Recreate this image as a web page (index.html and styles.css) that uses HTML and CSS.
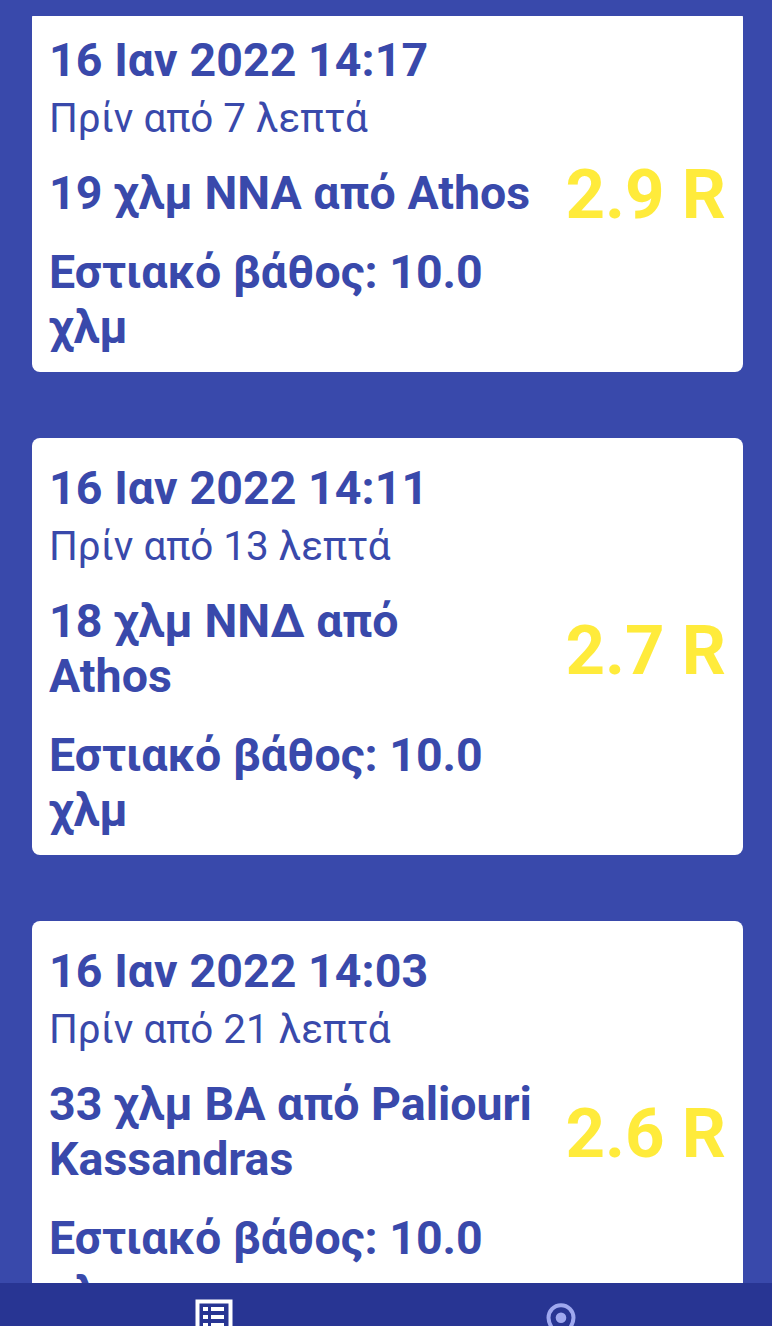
FILE: index.html
```html
<!DOCTYPE html>
<html lang="el">
<head>
    <meta charset="UTF-8">
    <meta name="viewport" content="width=device-width, initial-scale=1.0">
    <title>Σεισμοί</title>
    <link rel="stylesheet" href="styles.css">
</head>
<body>
    <main class="quake-list">
        <article class="card card-first">
            <div class="info">
                <h2 class="date">16 Ιαν 2022 14:17</h2>
                <p class="ago">Πρίν από 7 λεπτά</p>
                <p class="place">19 χλμ ΝΝΑ από Athos</p>
                <p class="depth">Εστιακό βάθος: 10.0<br>χλμ</p>
            </div>
            <div class="magnitude">2.9 R</div>
        </article>

        <article class="card">
            <div class="info">
                <h2 class="date">16 Ιαν 2022 14:11</h2>
                <p class="ago">Πρίν από 13 λεπτά</p>
                <p class="place">18 χλμ ΝΝΔ από<br>Athos</p>
                <p class="depth">Εστιακό βάθος: 10.0<br>χλμ</p>
            </div>
            <div class="magnitude">2.7 R</div>
        </article>

        <article class="card">
            <div class="info">
                <h2 class="date">16 Ιαν 2022 14:03</h2>
                <p class="ago">Πρίν από 21 λεπτά</p>
                <p class="place">33 χλμ ΒΑ από Paliouri<br>Kassandras</p>
                <p class="depth">Εστιακό βάθος: 10.0<br>χλμ</p>
            </div>
            <div class="magnitude">2.6 R</div>
        </article>
    </main>

    <nav class="tabs">
        <a class="tab active" href="#" aria-label="Λίστα">
            <svg width="38" height="38" viewBox="0 0 38 38">
                <path d="M2.500 2.500h33v33h-33z" fill="none" stroke="currentColor" stroke-width="4"/>
                <path d="M8 8h5v4H8zM16 8h13v4H16zM8 16h5v4H8zM16 16h13v4H16zM8 24h5v4H8zM16 24h13v4H16z" fill="currentColor"/>
            </svg>
        </a>
        <a class="tab" href="#" aria-label="Χάρτης">
            <svg class="pin" width="30" height="40" viewBox="0 0 30 40">
                <path d="M15 2.200C8 2.200 2.500 7.800 2.500 14.800 2.500 24 15 37 15 37s12.500-13 12.500-22.200C27.500 7.800 22 2.200 15 2.200z" fill="none" stroke="currentColor" stroke-width="4"/>
                <circle cx="15" cy="14.700" r="5.300" fill="currentColor"/>
            </svg>
        </a>
    </nav>
</body>
</html>
```

FILE: styles.css
```css
* {
    box-sizing: border-box;
}

body {
    margin: 0;
    padding-top: 16px;
    height: 100vh;
    display: flex;
    flex-direction: column;
    overflow: hidden;
    background-color: #3949AB;
    color: #3949AB;
    font-family: Roboto, "Noto Sans", sans-serif;
}

.quake-list {
    flex: 1;
    min-height: 0;
    padding: 0 29px 0 32px;
    overflow: hidden;
}

.card {
    display: flex;
    align-items: center;
    justify-content: space-between;
    margin-bottom: 66px;
    padding: 23px 17px 17px;
    background-color: #FFFFFF;
    border-radius: 8px;
}

/* scrolled partly out of view */
.card-first {
    margin-top: -6px;
}

.info {
    white-space: nowrap;
}

.date,
.place,
.depth {
    margin: 0;
    font-size: 46.5px;
    font-weight: 700;
    line-height: 55px;
}

.date {
    letter-spacing: 0.08px;
}

.ago {
    margin: 7px 0 24px;
    font-size: 40.4px;
    line-height: 47px;
}

.depth {
    margin-top: 24px;
}

.magnitude {
    padding-top: 2px;
    color: #FFEB3B;
    font-size: 69px;
    font-weight: 700;
    line-height: 82px;
    white-space: nowrap;
}

.tabs {
    display: flex;
    flex: none;
    height: 43px;
    padding: 0 38px 0 40px;
    overflow: hidden;
    background-color: #283593;
}

.tab {
    flex: 1;
    padding-top: 16px;
    text-align: center;
    color: #9FA8EF;
}

.tab.active {
    color: #FFFFFF;
}

.pin {
    margin-top: 4px;
}
```
